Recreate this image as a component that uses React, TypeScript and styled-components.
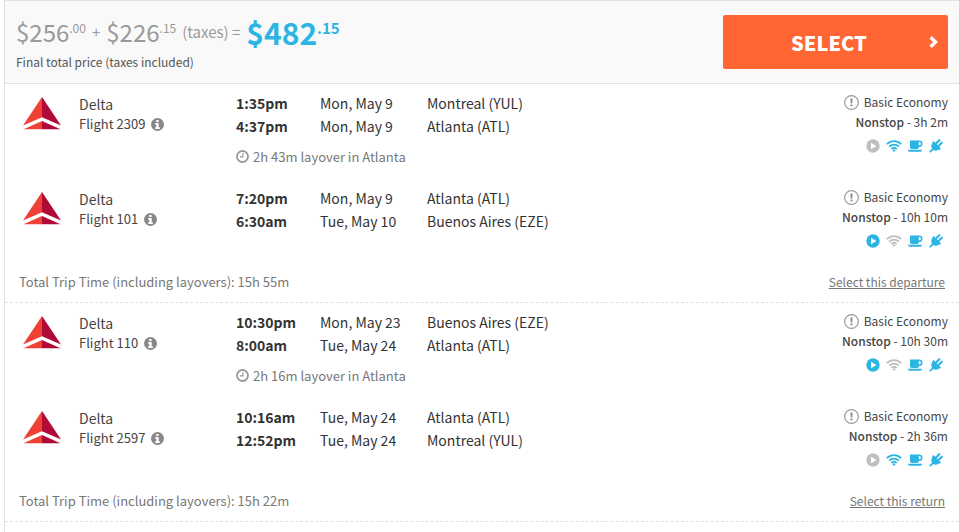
import React from 'react';
import styled, { createGlobalStyle } from 'styled-components';

const GlobalStyle = createGlobalStyle`
  * { box-sizing: border-box; }
  body {
    margin: 0;
    background: #fff;
    color: #454545;
    font-family: "Source Sans Pro", "Noto Sans CJK SC", sans-serif;
    font-size: 14px;
    line-height: 20px;
  }
`;

const Panel = styled.main`
  margin-left: 4px;
  min-height: 100vh;
  border-top: 1px solid #e2e2e2;
  border-left: 1px solid #e2e2e2;
`;

const Header = styled.header`
  display: flex;
  justify-content: space-between;
  align-items: flex-start;
  padding: 14px 11px 12px;
  background: #f9f9f9;
  border-bottom: 1px solid #e2e2e2;
`;

const PriceLine = styled.div`
  display: flex;
  align-items: center;
  gap: 6px;
  height: 34px;
  line-height: 34px;
  color: #999;
  font-size: 15px;
`;

const Amount = styled.span<{ $total?: boolean }>`
  display: flex;
  align-items: flex-start;
  color: ${(p) => (p.$total ? '#2cb5e3' : '#999')};
  font-size: ${(p) => (p.$total ? 30 : 24)}px;
  font-weight: ${(p) => (p.$total ? 700 : 400)};
`;

const Cents = styled.sup<{ $total?: boolean }>`
  font-size: ${(p) => (p.$total ? 15 : 12)}px;
  line-height: 26px;
  vertical-align: baseline;
`;

const PriceNote = styled.div`
  margin-top: 4px;
  font-size: 12px;
  line-height: 18px;
  color: #555;
`;

const SelectButton = styled.button`
  display: flex;
  align-items: center;
  width: 225px;
  height: 54px;
  padding: 0 10px 0 6px;
  border: 0;
  border-radius: 2px;
  background: #ff6633;
  color: #fff;
  font: 900 20px "Source Sans Pro", "Noto Sans CJK SC", sans-serif;
  cursor: pointer;

  span { flex: 1; }
`;

const Trip = styled.section`
  border-bottom: 1px dashed #e2e2e2;
`;

const LegRow = styled.article`
  display: grid;
  grid-template-columns: 40px 141px minmax(0, 1fr) auto;
  column-gap: 16px;
  height: 95px;
  padding: 8px 11px 0 18px;
`;

const LogoCell = styled.div`
  padding-top: 5px;
`;

const Airline = styled.div`
  padding-top: 2px;
`;

const FlightNumber = styled.div`
  display: flex;
  align-items: center;
  gap: 6px;
  font-size: 13px;
`;

const IconButton = styled.button`
  display: flex;
  padding: 0;
  border: 0;
  background: none;
  color: #888;
  cursor: pointer;
`;

const Stops = styled.div`
  line-height: 23px;
`;

const Stop = styled.div`
  display: grid;
  grid-template-columns: 84px 107px 1fr;
  color: #333;
`;

const Layover = styled.div`
  display: flex;
  align-items: center;
  gap: 4px;
  margin-top: 7px;
  font-size: 13px;
  color: #777;
`;

const Details = styled.div`
  display: flex;
  flex-direction: column;
  align-items: flex-end;
  font-size: 12px;
`;

const Fare = styled.div`
  display: flex;
  align-items: center;
  gap: 5px;
`;

const Duration = styled.div`
  strong { font-weight: 500; }
`;

const Amenities = styled.div`
  display: flex;
  align-items: center;
  gap: 6px;
  height: 28px;
  padding-right: 5px;
`;

const Amenity = styled.span<{ $on: boolean }>`
  display: flex;
  color: ${(p) => (p.$on ? '#2cb5e3' : '#bfbfbf')};
`;

const TripFooter = styled.footer`
  display: flex;
  justify-content: space-between;
  height: 28px;
  padding: 0 14px;
  color: #777;
  font-size: 13px;
  line-height: 16px;
`;

const TripLink = styled.a`
  color: #777;
  font-size: 12px;
  text-decoration: underline;
`;

const DeltaLogo = () => (
  <svg width="38" height="34" viewBox="0 0 38 34" role="img" aria-label="Delta">
    <path d="M19 0 L0 28.5 L19 20.2 Z" fill="#ef4135" />
    <path d="M19 0 L38 28.5 L19 20.2 Z" fill="#b00a37" />
    <path d="M19 24 L0.5 32.3 H19 Z" fill="#ef4135" />
    <path d="M19 24 L37.5 32.3 H19 Z" fill="#b00a37" />
  </svg>
);

const InfoIcon = () => (
  <svg width="13" height="13" viewBox="0 0 13 13" aria-hidden="true">
    <circle cx="6.5" cy="6.5" r="6.5" fill="currentColor" />
    <path d="M5.2 1.9h2.4v2H5.2zM4.2 4.9h3.5v4.3h1.1v1.8H4.2V9.2h1.1V6.7H4.2z" fill="#fff" />
  </svg>
);

const ClockIcon = () => (
  <svg width="13" height="13" viewBox="0 0 13 13" fill="none" stroke="#999" aria-hidden="true">
    <circle cx="6.5" cy="6.5" r="5.5" strokeWidth="1.8" />
    <path d="M6.9 3.3v3.6H4" strokeWidth="1.2" />
  </svg>
);

const NoticeIcon = () => (
  <svg width="15" height="15" viewBox="0 0 14 14" aria-hidden="true">
    <circle cx="7" cy="7" r="6.4" fill="none" stroke="#999" strokeWidth="1.1" />
    <path d="M6 3.2h2L7.7 8H6.3zM6.1 8.9h1.8v1.7H6.1z" fill="#888" />
  </svg>
);

const ChevronIcon = () => (
  <svg width="9" height="12" viewBox="0 0 9 12" fill="none" stroke="#fff" strokeWidth="3.4" aria-hidden="true">
    <path d="M1.7 1.2 L6.5 6 L1.7 10.8" />
  </svg>
);

const PlayIcon = () => (
  <svg width="14" height="14" viewBox="0 0 14 14" aria-hidden="true">
    <circle cx="7" cy="7" r="6.7" fill="currentColor" />
    <path d="M5 3.7 L10.4 7 L5 10.3 Z" fill="#fff" />
  </svg>
);

const WifiIcon = () => (
  <svg width="16" height="12" viewBox="0 0 16 12" fill="none" stroke="currentColor" strokeWidth="1.9" aria-hidden="true">
    <path d="M0.8 4.2 C4.8 0.1 11.2 0.1 15.2 4.2" />
    <path d="M3.1 6.600 C5.9 3.900 10.1 3.900 12.9 6.600" />
    <path d="M5.3 9 C6.9 7.5 9.1 7.5 10.7 9" />
    <path d="M8 9.300 L9.6 10.3 L8 12 L6.4 10.3 Z" fill="currentColor" stroke="none" />
  </svg>
);

const CupIcon = () => (
  <svg width="15" height="12" viewBox="0 0 15 12" aria-hidden="true">
    <path
      fill="currentColor"
      fillRule="evenodd"
      d="M2 0.5h9.3a3.2 3.2 0 0 1 0 6.4h-.5v.3A1.7 1.7 0 0 1 9.1 8.9H3.7A1.7 1.7 0 0 1 2 7.2zM10.8 2.1v3.2h.5a1.6 1.6 0 0 0 0-3.2z"
    />
    <path d="M0 9.8h14q0 2-1.7 2H1.7Q0 11.800 0 9.8z" fill="currentColor" />
  </svg>
);

const PlugIcon = () => (
  <svg width="14" height="14" viewBox="0 0 14 14" aria-hidden="true">
    <path d="M4.2 3.2 L10.8 9.8 C9 12 6 12.2 4.2 11 L1.5 13.7 L0.2 12.5 L3 9.8 C1.8 8 2 5 4.2 3.2 Z" fill="currentColor" />
    <path d="M6.5 5 L10.3 1.2 M9 7.5 L12.8 3.7" stroke="currentColor" strokeWidth="2.1" strokeLinecap="round" />
    <path d="M4.4 3.2 L10.8 9.6" stroke="currentColor" strokeWidth="2" strokeLinecap="round" />
  </svg>
);

type StopInfo = [time: string, date: string, place: string];
interface Leg {
  flight: string;
  stops: StopInfo[];
  layover?: string;
  duration: string;
  video: boolean;
  wifi: boolean;
}
interface TripInfo {
  legs: Leg[];
  total: string;
  action: string;
}

const trips: TripInfo[] = [
  {
    legs: [
      {
        flight: '2309',
        stops: [
          ['1:35pm', 'Mon, May 9', 'Montreal (YUL)'],
          ['4:37pm', 'Mon, May 9', 'Atlanta (ATL)'],
        ],
        layover: '2h 43m layover in Atlanta',
        duration: '3h 2m',
        video: false,
        wifi: true,
      },
      {
        flight: '101',
        stops: [
          ['7:20pm', 'Mon, May 9', 'Atlanta (ATL)'],
          ['6:30am', 'Tue, May 10', 'Buenos Aires (EZE)'],
        ],
        duration: '10h 10m',
        video: true,
        wifi: false,
      },
    ],
    total: '15h 55m',
    action: 'Select this departure',
  },
  {
    legs: [
      {
        flight: '110',
        stops: [
          ['10:30pm', 'Mon, May 23', 'Buenos Aires (EZE)'],
          ['8:00am', 'Tue, May 24', 'Atlanta (ATL)'],
        ],
        layover: '2h 16m layover in Atlanta',
        duration: '10h 30m',
        video: true,
        wifi: false,
      },
      {
        flight: '2597',
        stops: [
          ['10:16am', 'Tue, May 24', 'Atlanta (ATL)'],
          ['12:52pm', 'Tue, May 24', 'Montreal (YUL)'],
        ],
        duration: '2h 36m',
        video: false,
        wifi: true,
      },
    ],
    total: '15h 22m',
    action: 'Select this return',
  },
];

const FlightLeg = ({ leg }: { leg: Leg }) => (
  <LegRow>
    <LogoCell><DeltaLogo /></LogoCell>
    <Airline>
      <div>Delta</div>
      <FlightNumber>
        Flight {leg.flight}
        <IconButton type="button" aria-label={`Flight ${leg.flight} information`}><InfoIcon /></IconButton>
      </FlightNumber>
    </Airline>
    <Stops>
      {leg.stops.map(([time, date, place]) => (
        <Stop key={time}>
          <strong>{time}</strong>
          <span>{date}</span>
          <span>{place}</span>
        </Stop>
      ))}
      {leg.layover && <Layover><ClockIcon />{leg.layover}</Layover>}
    </Stops>
    <Details>
      <Fare><NoticeIcon />Basic Economy</Fare>
      <Duration><strong>Nonstop</strong> - {leg.duration}</Duration>
      <Amenities>
        <Amenity $on={leg.video}><PlayIcon /></Amenity>
        <Amenity $on={leg.wifi}><WifiIcon /></Amenity>
        <Amenity $on><CupIcon /></Amenity>
        <Amenity $on><PlugIcon /></Amenity>
      </Amenities>
    </Details>
  </LegRow>
);

export default function App() {
  return (
    <>
      <GlobalStyle />
      <Panel>
        <Header>
          <div>
            <PriceLine>
              <Amount>$256<Cents>.00</Cents></Amount>
              <span>+</span>
              <Amount>$226<Cents>.15</Cents></Amount>
              <span>(taxes) =</span>
              <Amount $total>$482<Cents $total>.15</Cents></Amount>
            </PriceLine>
            <PriceNote>Final total price (taxes included)</PriceNote>
          </div>
          <SelectButton type="button"><span>SELECT</span><ChevronIcon /></SelectButton>
        </Header>
        {trips.map((trip) => (
          <Trip key={trip.action}>
            {trip.legs.map((leg) => <FlightLeg key={leg.flight} leg={leg} />)}
            <TripFooter>
              <span>Total Trip Time (including layovers): {trip.total}</span>
              <TripLink href="#">{trip.action}</TripLink>
            </TripFooter>
          </Trip>
        ))}
      </Panel>
    </>
  );
}
